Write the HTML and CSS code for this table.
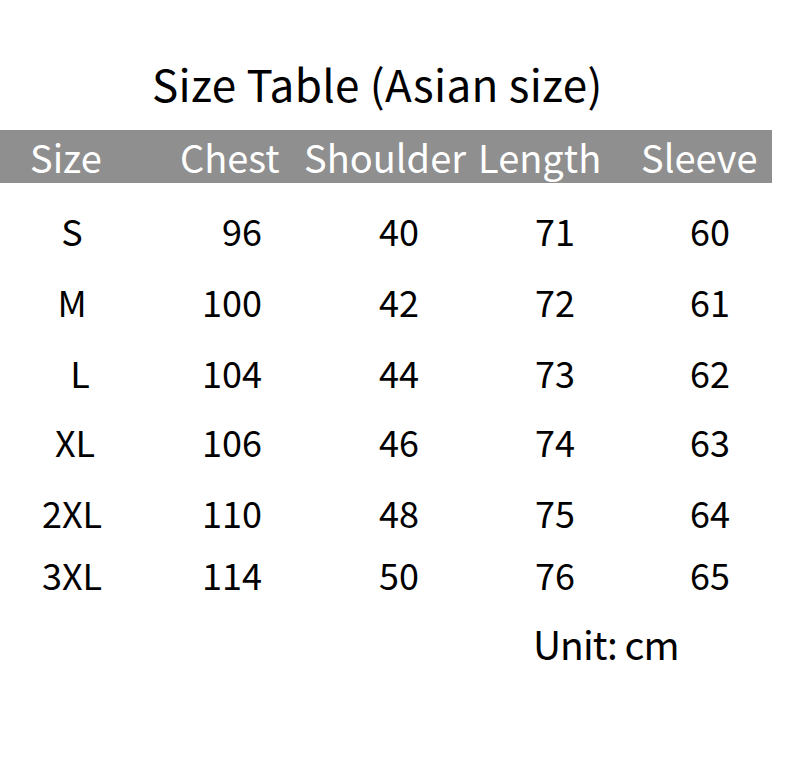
FILE: index.html
```html
<!DOCTYPE html>
<html>
<head>
<meta charset="utf-8">
<link rel="stylesheet" href="styles.css">
</head>
<body>
<div class="page">
  <h1 class="title">Size Table (Asian size)</h1>
  <div class="bar">
    <span>Size</span><span>Chest</span><span>Shoulder</span><span>Length</span><span>Sleeve</span>
  </div>
  <div class="rows">
    <div class="row r1"><span class="c1">S</span><span class="c2">96</span><span class="c3">40</span><span class="c4">71</span><span class="c5">60</span></div>
    <div class="row r2"><span class="c1">M</span><span class="c2">100</span><span class="c3">42</span><span class="c4">72</span><span class="c5">61</span></div>
    <div class="row r3"><span class="c1 nudge">L</span><span class="c2">104</span><span class="c3">44</span><span class="c4">73</span><span class="c5">62</span></div>
    <div class="row r4"><span class="c1 nudge-sm">XL</span><span class="c2">106</span><span class="c3">46</span><span class="c4">74</span><span class="c5">63</span></div>
    <div class="row r5"><span class="c1">2XL</span><span class="c2">110</span><span class="c3">48</span><span class="c4">75</span><span class="c5">64</span></div>
    <div class="row r6"><span class="c1">3XL</span><span class="c2">114</span><span class="c3">50</span><span class="c4">76</span><span class="c5">65</span></div>
  </div>
  <p class="unit">Unit: cm</p>
</div>
</body>
</html>
```
FILE: styles.css
```css
html, body {
  margin: 0;
  padding: 0;
  background: #fff;
}
.page {
  width: 790px;
  height: 760px;
  font-family: "Noto Sans CJK SC", "Noto Sans", sans-serif;
  color: #000;
  overflow: hidden;
}
.title {
  margin: 0;
  font-weight: 400;
  font-size: 44px;
  line-height: 44px;
  letter-spacing: 0.3px;
  padding: 61px 0 25px 152px;
}
.bar {
  width: 772px;
  height: 53px;
  box-sizing: border-box;
  background: #8f8f8f;
  color: #fff;
  font-size: 38px;
  line-height: 53px;
  display: grid;
  grid-template-columns: 150px 124px 174px 163px 1fr;
  padding-left: 30px;
}
.rows {
  margin-top: 12px;
  font-size: 36px;
}
.row {
  display: grid;
  grid-template-columns: 144px 118px 273px 155px 1fr;
  line-height: 71px;
  height: 71px;
}
.r3 { height: 69px; }
.r5 { height: 62px; }
.c1 { text-align: center; }
.c1.nudge { padding-left: 16px; }
.c1.nudge-sm { padding-left: 6px; }
.c2 { text-align: right; }
.c3 { padding-left: 117px; }
.unit {
  margin: 14px 0 0;
  font-size: 39px;
  line-height: 39px;
  letter-spacing: -1px;
  padding-left: 533px;
}
```
